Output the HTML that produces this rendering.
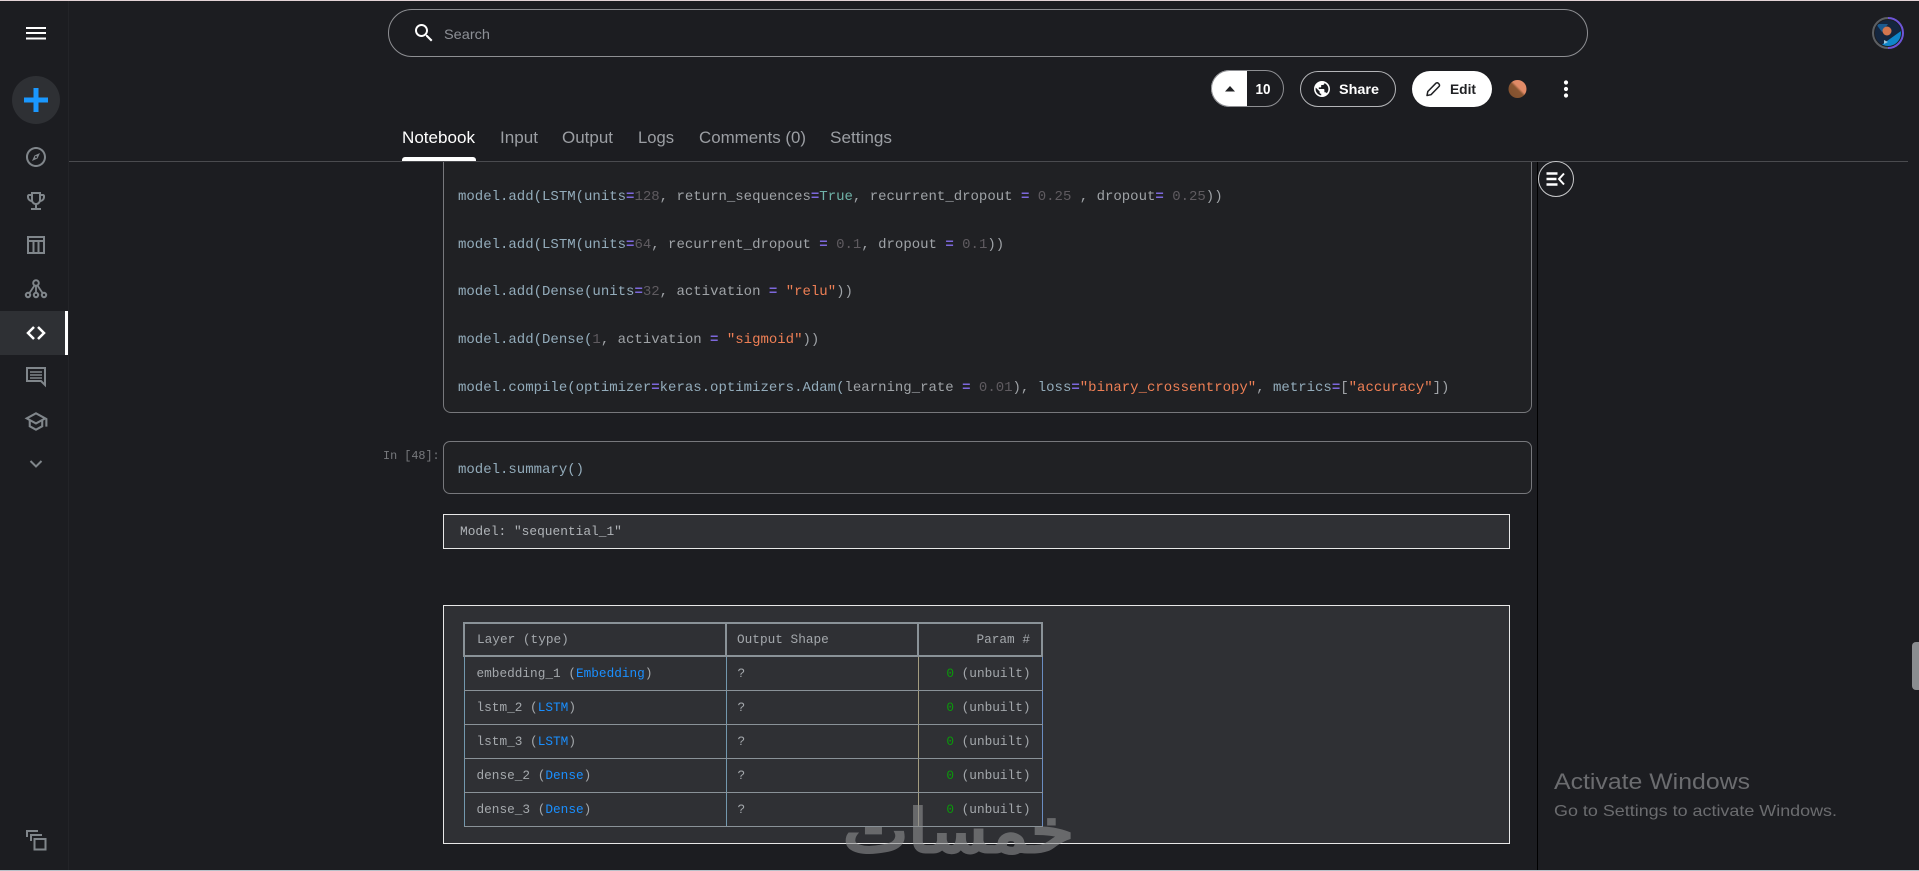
<!DOCTYPE html>
<html lang="en">
<head>
<meta charset="utf-8">
<title>Notebook</title>
<style>
html,body{margin:0;padding:0;width:1919px;height:871px;overflow:hidden;background:#1c1d21}
body{position:relative;font-family:"Liberation Sans",sans-serif}
.abs,.line{position:absolute}
.cell{position:absolute;box-sizing:border-box;background:#202124;border:1px solid #77787c}
.out{position:absolute;box-sizing:border-box;background:#2f3034;border:1px solid #e8e8e8;left:443px;width:1067px}
.line{left:458px;height:20px;line-height:20px;font:14px/20px "Liberation Mono",monospace;color:#9fa3a7;white-space:pre}
.m{color:#93acbb}.o{color:#7d68dc;font-weight:bold}.n{color:#5f5b60}.b{color:#6fb3a8}.s{color:#ee7f55}
table{position:absolute;left:463px;top:622px;width:578px;table-layout:fixed;border-collapse:collapse;font:12.75px "Liberation Mono",monospace;color:#a4a8ac}
th{height:33px;padding:0 11px;border:2px solid #8a9298;font-weight:normal;text-align:left;box-sizing:border-box}
td{height:34px;padding:0 11px;border:1px solid #8a9298;box-sizing:border-box;white-space:pre}
td:nth-child(1){padding-left:12px;border-left-color:#7398ae;border-right-color:#7398ae}
td:nth-child(2){border-right-color:#a39c80}
td:nth-child(3){border-right-color:#6a8cc0}
th:nth-child(1){padding-left:12px}
th:nth-child(2){padding-left:10px}
.r{text-align:right}.blue{color:#1a8fff}.green{color:#0a9a0a}
svg{position:absolute;left:0;top:0}
</style>
</head>
<body>
<div class="abs" style="left:0;top:0;width:1919px;height:1px;background:#e3d3d6"></div>
<div class="abs" style="left:0;top:870px;width:1919px;height:1px;background:#b8c0c8"></div>
<div class="abs" style="left:68px;top:1px;width:1px;height:869px;background:#232428"></div>
<div class="abs" style="left:0;top:311px;width:65px;height:44px;background:#2e3034"></div>
<div class="abs" style="left:65px;top:311px;width:3px;height:44px;background:#fff"></div>
<div class="abs" style="left:12px;top:76px;width:48px;height:48px;border-radius:50%;background:#2e3034"></div>

<div class="abs" style="box-sizing:border-box;left:388px;top:9px;width:1200px;height:48px;border:1px solid #8e8f93;border-radius:24px"></div>

<div class="cell" style="left:443px;top:150px;width:1089px;height:263px;border-radius:8px"></div>
<div class="abs" style="left:69px;top:130px;width:1470px;height:31px;background:#1c1d21"></div>
<div class="abs" style="left:69px;top:161px;width:1839px;height:1px;background:#4a4b4f"></div>
<div class="abs" style="left:402px;top:157px;width:74px;height:4px;background:#fff;border-radius:3px 3px 0 0"></div>
<div class="abs" style="left:1537px;top:162px;width:1px;height:708px;background:#000"></div>

<div class="line" style="top:187px"><span class="m">model.add(LSTM(units</span><span class="o">=</span><span class="n">128</span>, return_sequences<span class="o">=</span><span class="b">True</span>, recurrent_dropout <span class="o">=</span> <span class="n">0.25</span> , dropout<span class="o">=</span> <span class="n">0.25</span>))</div>
<div class="line" style="top:235px"><span class="m">model.add(LSTM(units</span><span class="o">=</span><span class="n">64</span>, recurrent_dropout <span class="o">=</span> <span class="n">0.1</span>, dropout <span class="o">=</span> <span class="n">0.1</span>))</div>
<div class="line" style="top:282px"><span class="m">model.add(Dense(units</span><span class="o">=</span><span class="n">32</span>, activation <span class="o">=</span> <span class="s">"relu"</span>))</div>
<div class="line" style="top:330px"><span class="m">model.add(Dense(</span><span class="n">1</span>, activation <span class="o">=</span> <span class="s">"sigmoid"</span>))</div>
<div class="line" style="top:378px"><span class="m">model.compile(optimizer</span><span class="o">=</span><span class="m">keras.optimizers.Adam(</span>learning_rate <span class="o">=</span> <span class="n">0.01</span>), <span class="m">loss</span><span class="o">=</span><span class="s">"binary_crossentropy"</span>, <span class="m">metrics</span><span class="o">=</span>[<span class="s">"accuracy"</span>])</div>

<div class="abs" style="left:383px;top:446px;font:11.8px/20px 'Liberation Mono',monospace;color:#77797d;white-space:pre">In [48]:</div>
<div class="cell" style="left:443px;top:441px;width:1089px;height:53px;border-radius:7px"></div>
<div class="line" style="top:460px"><span class="m">model.summary()</span></div>

<div class="out" style="top:514px;height:35px"></div>
<div class="abs" style="left:460px;top:522px;font:12.85px/20px 'Liberation Mono',monospace;color:#b0b4b8;white-space:pre">Model: "sequential_1"</div>

<div class="out" style="top:605px;height:239px"></div>
<table>
<colgroup><col style="width:262px"><col style="width:192px"><col style="width:124px"></colgroup>
<tr><th>Layer (type)</th><th>Output Shape</th><th class="r">Param #</th></tr>
<tr><td>embedding_1 (<span class="blue">Embedding</span>)</td><td>?</td><td class="r"><span class="green">0</span> (unbuilt)</td></tr>
<tr><td>lstm_2 (<span class="blue">LSTM</span>)</td><td>?</td><td class="r"><span class="green">0</span> (unbuilt)</td></tr>
<tr><td>lstm_3 (<span class="blue">LSTM</span>)</td><td>?</td><td class="r"><span class="green">0</span> (unbuilt)</td></tr>
<tr><td>dense_2 (<span class="blue">Dense</span>)</td><td>?</td><td class="r"><span class="green">0</span> (unbuilt)</td></tr>
<tr><td>dense_3 (<span class="blue">Dense</span>)</td><td>?</td><td class="r"><span class="green">0</span> (unbuilt)</td></tr>
</table>

<div class="abs" style="left:1211px;top:70px;width:36px;height:37px;background:#fff;border-radius:18.5px 0 0 18.5px"></div>
<div class="abs" style="box-sizing:border-box;left:1211px;top:70px;width:73px;height:37px;border:1px solid #8e8f93;border-radius:18.5px"></div>
<div class="abs" style="box-sizing:border-box;left:1300px;top:71px;width:96px;height:36px;border:1px solid #b4b5b8;border-radius:18px"></div>
<div class="abs" style="left:1412px;top:71px;width:80px;height:36px;background:#fff;border-radius:18px"></div>
<div class="abs" style="box-sizing:border-box;left:1538px;top:161px;width:36px;height:36px;border:1px solid #c8c9cb;border-radius:50%;background:#1c1d21"></div>
<div class="abs" style="left:1912px;top:642px;width:7px;height:48px;background:#8a8d90;border-radius:4px 0 0 4px"></div>

<svg width="1919" height="871" viewBox="0 0 1919 871" xmlns="http://www.w3.org/2000/svg">
<defs>
<linearGradient id="br" x1="1" y1="0" x2="0" y2="1"><stop offset="0" stop-color="#e58d6a"/><stop offset=".42" stop-color="#e08a66"/><stop offset=".52" stop-color="#8a5632"/><stop offset="1" stop-color="#7e4e2c"/></linearGradient>
<clipPath id="avc"><circle cx="1888" cy="33" r="13"/></clipPath>
</defs>
<!-- hamburger -->
<rect x="26" y="27" width="20" height="2" fill="#fff"/><rect x="26" y="32" width="20" height="2" fill="#fff"/><rect x="26" y="37.500" width="20" height="2" fill="#fff"/>
<!-- plus -->
<path d="M36 88V112M24 100H48" stroke="#1a98ff" stroke-width="5" fill="none"/>
<!-- sidebar icons -->
<g fill="#80868b">
<path transform="translate(24 145)" d="M12 2C6.48 2 2 6.48 2 12s4.48 10 10 10 10-4.480 10-10S17.520 2 12 2zm0 18c-4.410 0-8-3.590-8-8s3.590-8 8-8 8 3.590 8 8-3.590 8-8 8zm-4-4l5.500-2.500L16 8l-5.500 2.500L8 16zm4-5c.55 0 1 .45 1 1s-.45 1-1 1-1-.45-1-1 .45-1 1-1z"/>
<path transform="translate(24 189)" d="M19 5h-2V3H7v2H5c-1.100 0-2 .9-2 2v1c0 2.550 1.920 4.630 4.390 4.940.63 1.500 1.980 2.630 3.610 2.960V19H7v2h10v-2h-4v-3.100c1.630-.33 2.980-1.460 3.610-2.960C19.080 12.630 21 10.550 21 8V7c0-1.100-.9-2-2-2zM5 8V7h2v3.820C5.840 10.400 5 9.300 5 8zm7 6c-1.650 0-3-1.350-3-3V5h6v6c0 1.650-1.350 3-3 3zm7-6c0 1.300-.84 2.400-2 2.820V7h2v1z"/>
<path transform="translate(23.500 409) scale(1.04)" d="M12 3L1 9l4 2.180v6L12 21l7-3.820v-6l2-1.090V17h2V9L12 3zm6.820 6L12 12.720 5.180 9 12 5.280 18.820 9zM17 15.990l-5 2.730-5-2.730v-3.720L12 15l5-2.730v3.720z"/>
</g>
<g fill="none" stroke="#80868b" stroke-width="2">
<path d="M28 237H44V253H28ZM28 241H44M33.500 241V253M38.500 241V253"/>
<circle cx="36" cy="283" r="2.800"/><circle cx="28" cy="295" r="2.200"/><circle cx="36" cy="295" r="2.200"/><circle cx="44" cy="295" r="2.200"/>
<path d="M36 286V292.500M34.500 285.500L29.500 293M37.500 285.500L42.500 293" stroke-width="1.800"/>
<path d="M27 368H45V385L41 381H27Z"/>
<path d="M30 372H42M30 375H42M30 378H42" stroke-width="1.500"/>
<path d="M30.500 461L36 466.500L41.500 461"/>
<path d="M34.500 839H45.500V849.500H34.500Z"/>
<path d="M27 837V831H38M31 841V835H42"/>
</g>
<path d="M34 327L28 333L34 339M38 327L44 333L38 339" fill="none" stroke="#fff" stroke-width="2.500"/>
<!-- search icon -->
<path transform="translate(412 21)" fill="#fff" d="M15.500 14h-.79l-.28-.27C15.410 12.590 16 11.110 16 9.500 16 5.910 13.090 3 9.500 3S3 5.910 3 9.500 5.910 16 9.500 16c1.610 0 3.090-.59 4.230-1.570l.27.28v.79l5 4.990L20.490 19l-4.990-5zm-6 0C7.010 14 5 11.990 5 9.500S7.010 5 9.500 5 14 7.010 14 9.500 11.990 14 9.500 14z"/>
<text x="444" y="39" font-family="Liberation Sans" font-size="14" fill="#8d9096" textLength="46" lengthAdjust="spacingAndGlyphs">Search</text>
<!-- tabs -->
<g font-family="Liberation Sans" font-size="16.500" fill="#9b9ea3">
<text x="402" y="143" fill="#fff" textLength="73" lengthAdjust="spacingAndGlyphs">Notebook</text>
<text x="500" y="143" textLength="38" lengthAdjust="spacingAndGlyphs">Input</text>
<text x="562" y="143" textLength="51" lengthAdjust="spacingAndGlyphs">Output</text>
<text x="638" y="143" textLength="36" lengthAdjust="spacingAndGlyphs">Logs</text>
<text x="699" y="143" textLength="107" lengthAdjust="spacingAndGlyphs">Comments (0)</text>
<text x="830" y="143" textLength="62" lengthAdjust="spacingAndGlyphs">Settings</text>
</g>
<!-- action buttons -->
<path d="M1225 91.500L1230 86L1235 91.500Z" fill="#202124"/>
<text x="1255.500" y="94" font-family="Liberation Sans" font-weight="bold" font-size="15" fill="#fff" textLength="15" lengthAdjust="spacingAndGlyphs">10</text>
<path transform="translate(1312.400 79.400) scale(.8)" fill="#fff" d="M12 2C6.480 2 2 6.480 2 12s4.480 10 10 10 10-4.480 10-10S17.520 2 12 2zm-1 17.930c-3.950-.49-7-3.850-7-7.930 0-.62.08-1.210.21-1.790L9 15v1c0 1.100.9 2 2 2v1.930zm6.900-2.540c-.26-.81-1-1.390-1.900-1.390h-1v-3c0-.55-.45-1-1-1H8v-2h2c.55 0 1-.45 1-1V7h2c1.100 0 2-.9 2-2v-.41c2.930 1.190 5 4.060 5 7.410 0 2.080-.8 3.970-2.100 5.390z"/>
<text x="1339" y="94" font-family="Liberation Sans" font-weight="bold" font-size="14" fill="#fff" textLength="40" lengthAdjust="spacingAndGlyphs">Share</text>
<path d="M1427 95.500L1427.800 91.500L1435.800 83.300C1436.500 82.600 1437.600 82.600 1438.300 83.300L1439 84C1439.700 84.700 1439.700 85.800 1439 86.500L1431 94.700Z" fill="none" stroke="#202124" stroke-width="1.500" stroke-linejoin="round"/>
<text x="1450" y="94" font-family="Liberation Sans" font-weight="bold" font-size="14" fill="#202124" textLength="26" lengthAdjust="spacingAndGlyphs">Edit</text>
<circle cx="1517.500" cy="89" r="9" fill="url(#br)"/>
<circle cx="1566" cy="82.500" r="2.100" fill="#fff"/><circle cx="1566" cy="89" r="2.100" fill="#fff"/><circle cx="1566" cy="95.500" r="2.100" fill="#fff"/>
<!-- top right avatar -->
<g clip-path="url(#avc)">
<rect x="1875" y="20" width="26" height="26" fill="#14263f"/>
<path d="M1880 46L1901 31V46Z" fill="#0f86c9"/>
<path d="M1876 24H1888L1882 32Z" fill="#1b5a8f"/>
<circle cx="1887" cy="31" r="4.500" fill="#d2754e"/>
<path d="M1884 40L1888 42L1884 44Z" fill="#9fc4d8"/>
</g>
<path d="M1888 18A15 15 0 0 0 1888 48" fill="none" stroke="#5c5f63" stroke-width="2"/>
<path d="M1888 18A15 15 0 0 1 1888 48" fill="none" stroke="#6d55d8" stroke-width="2"/>
<!-- toggle -->
<path d="M1546.500 173.500H1557.500M1546.500 179H1556.500M1546.500 184.500H1557.500" stroke="#fff" stroke-width="2.500" fill="none"/>
<path d="M1564 173.500L1559 179L1564 184.500" stroke="#fff" stroke-width="2" fill="none"/>
<!-- watermark -->
<g opacity=".6">
<text x="958.500" y="852" text-anchor="middle" direction="rtl" font-family="'DejaVu Sans',sans-serif" font-size="60" fill="#8e8f91" stroke="#8e8f91" stroke-width="3" textLength="231" lengthAdjust="spacingAndGlyphs">خمسات</text>
</g>
<!-- activate windows -->
<text x="1554" y="789" font-family="Liberation Sans" font-size="22" fill="#6b6c6f" textLength="196" lengthAdjust="spacingAndGlyphs">Activate Windows</text>
<text x="1554" y="816" font-family="Liberation Sans" font-size="16" fill="#6b6c6f" textLength="283" lengthAdjust="spacingAndGlyphs">Go to Settings to activate Windows.</text>
</svg>
</body>
</html>
